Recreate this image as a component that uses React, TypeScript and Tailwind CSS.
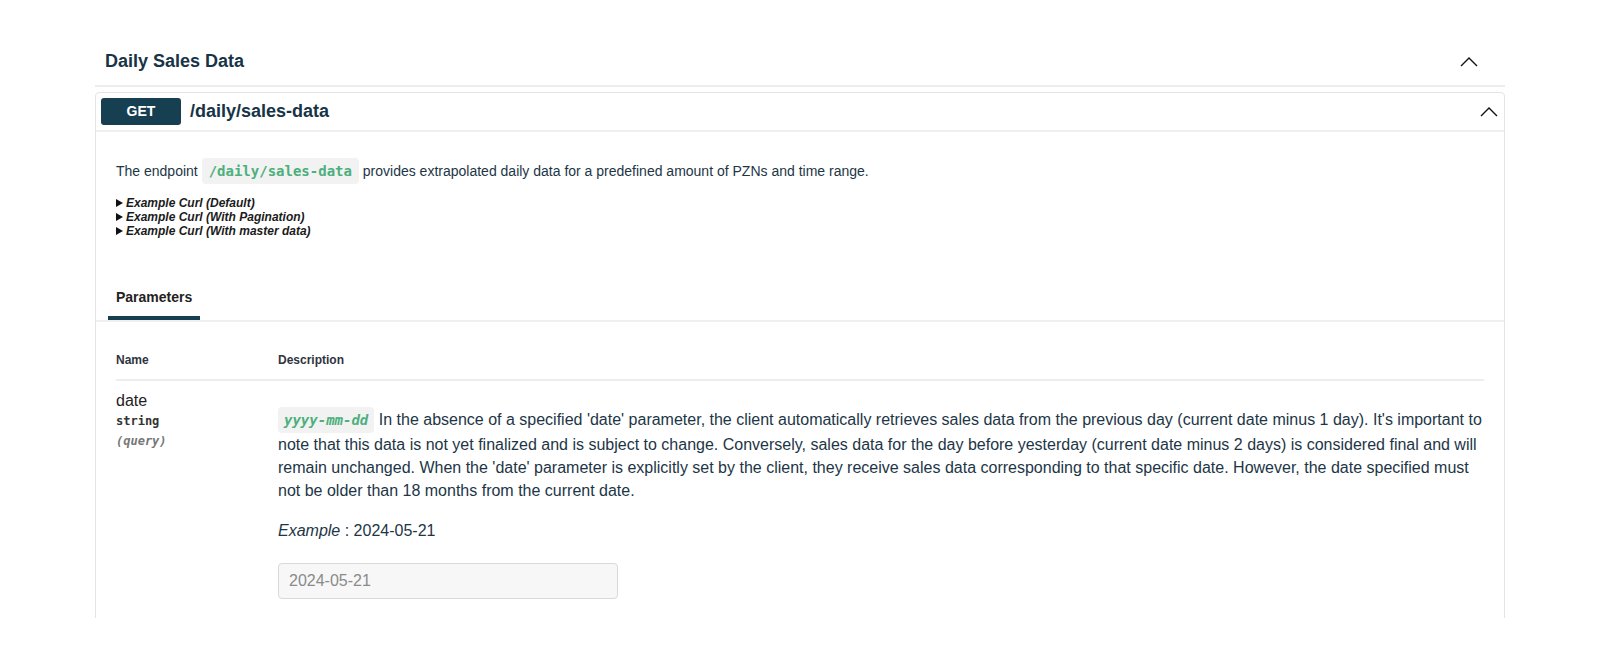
import React from 'react';

const sans = 'font-["Liberation_Sans",Arial,sans-serif]';
const mono = 'font-["DejaVu_Sans_Mono",monospace]';

function Chevron() {
  return (
    <svg width="18" height="10" viewBox="0 0 18 10" fill="none">
      <polyline points="1,9 9,1 17,9" stroke="#111" strokeWidth="1.4" />
    </svg>
  );
}

function CurlToggle({ label }: { label: string }) {
  return (
    <div className="flex items-center h-[14px]">
      <svg width="7" height="8" viewBox="0 0 7 8" className="mr-[3px]">
        <polygon points="0,0 7,4 0,8" fill="#111" />
      </svg>
      <span className="text-[12px] font-bold italic text-[#1b1b1b]">{label}</span>
    </div>
  );
}

function App() {
  return (
    <div className={`h-[618px] overflow-hidden bg-white ${sans}`}>
      <div className="ml-[95px] w-[1410px] pt-[38px]">
        {/* tag header */}
        <div className="h-[49px] flex items-center justify-between pl-[10px] pr-[27px] border-b-2 border-[#ededed]">
          <h2 className="text-[18px] font-bold text-[#173447]">Daily Sales Data</h2>
          <Chevron />
        </div>

        {/* operation block */}
        <div className="mt-[5px] border border-[#e4e4e4] rounded-[4px]">
          <div className="flex items-center justify-between p-[5px] border-b-2 border-[#efefef]">
            <div className="flex items-center">
              <span className="w-[80px] h-[27px] flex items-center justify-center rounded-[3px] bg-[#173f52] text-white text-[14px] font-bold">
                GET
              </span>
              <span className="ml-[9px] text-[18px] font-bold text-[#173447]">/daily/sales-data</span>
            </div>
            <div className="pr-[1px]">
              <Chevron />
            </div>
          </div>

          <div className="px-[20px] pt-[26px]">
            <p className="text-[14px] leading-[26px] text-[#1d3646]">
              The endpoint{' '}
              <code className={`inline-block px-[7px] rounded-[4px] bg-[#f1f2f1] text-[14px] font-bold text-[#4caf7c] ${mono}`}>
                /daily/sales-data
              </code>{' '}
              provides extrapolated daily data for a predefined amount of PZNs and time range.
            </p>
            <div className="mt-[12px]">
              <CurlToggle label="Example Curl (Default)" />
              <CurlToggle label="Example Curl (With Pagination)" />
              <CurlToggle label="Example Curl (With master data)" />
            </div>
          </div>

          {/* tabs */}
          <div className="mt-[47px] pl-[12px] border-b-2 border-[#efefef]">
            <div className="inline-block px-[8px] pb-[9px] border-b-4 border-[#173f52] text-[14px] leading-[20px] font-bold text-[#222]">
              Parameters
            </div>
          </div>

          <div className="px-[20px] pb-[40px]">
            <div className="flex pt-[30px] pb-[11px] border-b-2 border-[#ededed] text-[12px] leading-[16px] font-bold text-[#2f3440]">
              <div className="w-[162px]">Name</div>
              <div>Description</div>
            </div>

            <div className="flex">
              <div className="w-[162px] shrink-0 pt-[10px]">
                <div className="text-[16px] leading-[20px] text-[#222]">date</div>
                <div className={`mt-[2px] text-[12px] leading-[16px] font-bold text-[#333] ${mono}`}>string</div>
                <div className={`mt-[4px] text-[12px] leading-[16px] italic font-semibold text-[#777] ${mono}`}>(query)</div>
              </div>
              <div className="flex-1 pt-[26px] text-[16px] leading-[23px] text-[#1d3646]">
                <p>
                  <code className={`inline-block px-[6px] rounded-[4px] bg-[#f1f2f1] text-[14px] leading-[26px] font-bold italic text-[#4caf7c] ${mono}`}>
                    yyyy-mm-dd
                  </code>{' '}
                  In the absence of a specified 'date' parameter, the client automatically retrieves sales data from the previous day (current date minus 1 day). It's important to note that this data is not yet finalized and is subject to change. Conversely, sales data for the day before yesterday (current date minus 2 days) is considered final and will remain unchanged. When the 'date' parameter is explicitly set by the client, they receive sales data corresponding to that specific date. However, the date specified must not be older than 18 months from the current date.
                </p>
                <p className="mt-[17px]">
                  <i>Example</i> : 2024-05-21
                </p>
                <input
                  type="text"
                  placeholder="2024-05-21"
                  className="mt-[21px] w-[340px] h-[36px] px-[10px] rounded-[4px] border border-[#d9d9d9] bg-[#f7f7f7] text-[16px] placeholder:text-[#8a8a8a] outline-none"
                />
              </div>
            </div>
          </div>
        </div>
      </div>
    </div>
  );
}

export default App;
